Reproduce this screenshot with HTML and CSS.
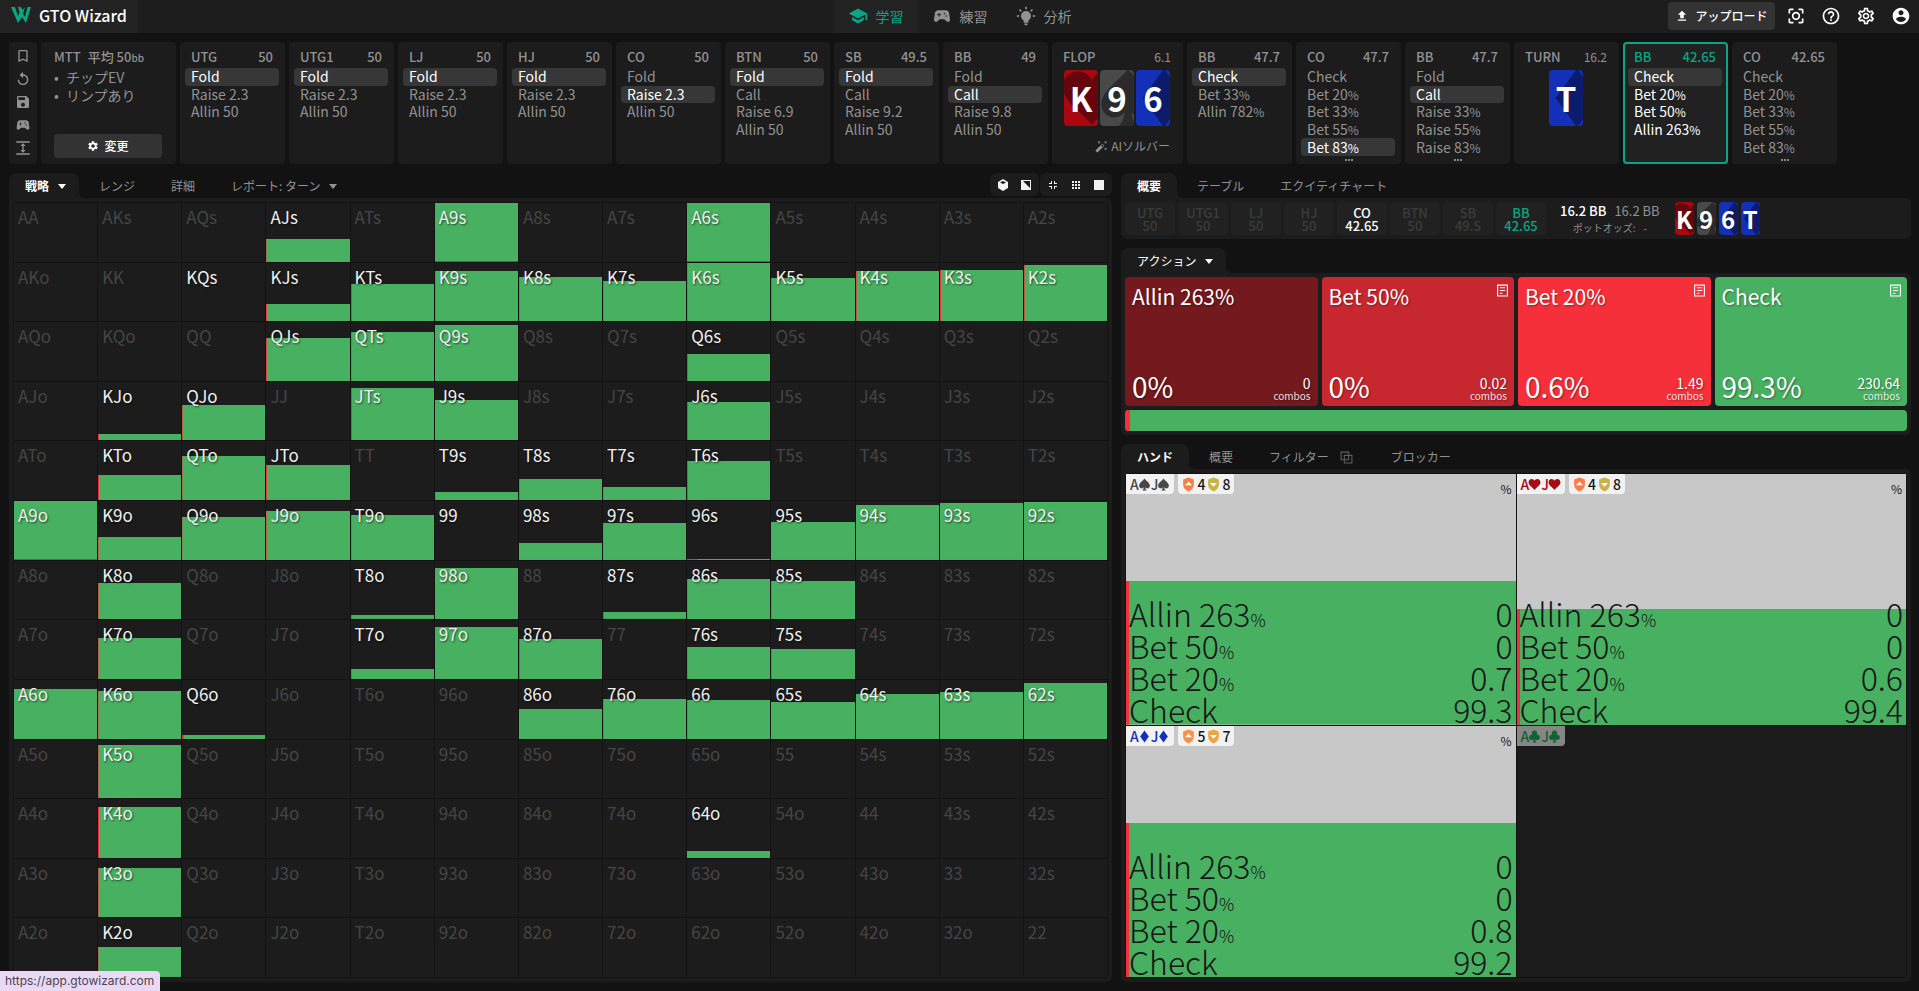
FILE: index.html
```html
<!DOCTYPE html>
<html lang="ja">
<head>
<meta charset="utf-8">
<title>GTO Wizard</title>
<link rel="stylesheet" href="styles.css">
</head>
<body>
<svg class="defs" aria-hidden="true">
  <symbol id="spade" viewBox="0 0 24 24"><path d="M12 1C9.500 5 2 9 2 14.500a4.800 4.800 0 0 0 8.700 2.800C10.600 19.500 9.800 21.500 8 23h8c-1.800-1.500-2.600-3.500-2.700-5.700A4.800 4.800 0 0 0 22 14.500C22 9 14.500 5 12 1z"/></symbol>
  <symbol id="heart" viewBox="0 0 24 24"><path d="M12 22C9 18 1 13.500 1 7.800 1 4.500 3.500 2 6.600 2 9 2 11 3.300 12 5.300 13 3.300 15 2 17.400 2 20.500 2 23 4.500 23 7.800 23 13.500 15 18 12 22z"/></symbol>
  <symbol id="diamond" viewBox="0 0 24 24"><path d="M12 1l8 11-8 11-8-11z"/></symbol>
  <symbol id="club" viewBox="0 0 24 24"><path d="M12 1a5 5 0 0 0-4.300 7.700A5 5 0 1 0 10.700 17c-.1 2.400-1 4.500-2.700 6h8c-1.700-1.500-2.600-3.600-2.700-6a5 5 0 1 0 3-8.300A5 5 0 0 0 12 1z"/></symbol>
  <symbol id="pad" viewBox="0 0 24 24"><path d="M21.58 16.09l-1.09-7.66C20.21 6.46 18.52 5 16.53 5H7.47C5.48 5 3.79 6.46 3.51 8.43l-1.09 7.66C2.2 17.63 3.39 19 4.94 19c.68 0 1.32-.27 1.8-.75L9 16h6l2.250 2.250c.48.48 1.130.75 1.800.75 1.560 0 2.750-1.370 2.530-2.910zM11 11H9v2H8v-2H6v-1h2V8h1v2h2v1zm4-1c-.55 0-1-.45-1-1s.45-1 1-1 1 .45 1 1-.45 1-1 1zm2 3c-.55 0-1-.45-1-1s.45-1 1-1 1 .45 1 1-.45 1-1 1z"/></symbol>
  <symbol id="cog" viewBox="0 0 24 24"><path d="M19.14 12.94c.04-.3.06-.61.06-.94 0-.32-.02-.64-.07-.94l2.030-1.580c.18-.14.23-.41.12-.61l-1.920-3.320c-.12-.22-.37-.29-.59-.22l-2.390.96c-.5-.38-1.030-.7-1.620-.94l-.36-2.540c-.04-.24-.24-.41-.48-.41h-3.840c-.24 0-.43.17-.47.41l-.36 2.540c-.59.24-1.130.57-1.620.94l-2.390-.96c-.22-.08-.47 0-.59.22L2.740 8.870c-.12.21-.08.47.12.61l2.030 1.580c-.05.3-.09.63-.09.94s.02.64.07.94l-2.030 1.580c-.18.14-.23.41-.12.61l1.920 3.320c.12.22.37.29.59.22l2.390-.96c.5.38 1.030.7 1.620.94l.36 2.540c.05.24.24.41.48.41h3.840c.24 0 .44-.17.47-.41l.36-2.540c.59-.24 1.130-.56 1.620-.94l2.390.96c.22.08.47 0 .59-.22l1.920-3.320c.12-.22.07-.47-.12-.61l-2.010-1.580zM12 15.600c-1.980 0-3.600-1.620-3.600-3.600s1.620-3.600 3.600-3.600 3.600 1.620 3.600 3.600-1.620 3.600-3.600 3.600z"/></symbol>
  <symbol id="note" viewBox="0 0 24 24"><path d="M3 2h18v20H3zM7 7h10M7 12h10M7 17h5" fill="none" stroke="currentColor" stroke-width="2"/></symbol>
  <symbol id="shield-up" viewBox="0 0 24 28"><path d="M12 1l10 3.500v9C22 20 18 24.500 12 27 6 24.500 2 20 2 13.500v-9z"/><path d="M12 8.500l6.500 7h-13z" fill="#fff"/></symbol>
  <symbol id="shield-down" viewBox="0 0 24 28"><path d="M12 1l10 3.500v9C22 20 18 24.500 12 27 6 24.500 2 20 2 13.500v-9z"/><path d="M12 18l6.500-7h-13z" fill="#fff"/></symbol>
</svg>

<header class="topbar">
  <a class="brand" href="#">
    <svg class="logo" viewBox="0 0 20 16"><path d="M0 0h4l3 9 1.500-4L7 0h3l1.500 3L14 0l-2 7 2 3 2.500-10H20l-5 16-4-6-4 6z" fill="#0aa584"/></svg>
    <span>GTO Wizard</span>
  </a>
  <nav class="nav">
    <a class="nav-item current" href="#"><svg viewBox="0 0 24 24"><path d="M5 13.180v4L12 21l7-3.820v-4L12 17l-7-3.820zM12 3L1 9l11 6 9-4.910V17h2V9L12 3z"/></svg>学習</a>
    <a class="nav-item" href="#"><svg><use href="#pad"/></svg>練習</a>
    <a class="nav-item" href="#"><svg viewBox="0 0 24 24"><path d="M12 6A6 6 0 0 1 18 12C18 14.220 16.790 16.160 15 17.200V19A1 1 0 0 1 14 20H10A1 1 0 0 1 9 19V17.200C7.210 16.160 6 14.220 6 12A6 6 0 0 1 12 6M14 21V22A1 1 0 0 1 13 23H11A1 1 0 0 1 10 22V21H14M20 11H23V13H20V11M1 11H4V13H1V11M13 1V4H11V1H13M4.920 3.500L7.050 5.640L5.630 7.050L3.500 4.930L4.920 3.500M16.950 5.630L19.070 3.500L20.500 4.930L18.370 7.050L16.950 5.630Z"/></svg>分析</a>
  </nav>
  <div class="tools">
    <button class="upload" type="button"><svg viewBox="0 0 24 24"><path d="M5 20h14v-2H5v2zm0-10h4v6h6v-6h4l-7-7-7 7z"/></svg>アップロード</button>
    <button class="tool" type="button" aria-label="スキャン"><svg viewBox="0 0 24 24"><path d="M5 15H3v4c0 1.100.9 2 2 2h4v-2H5v-4zM5 5h4V3H5c-1.100 0-2 .9-2 2v4h2V5zm14-2h-4v2h4v4h2V5c0-1.100-.9-2-2-2zm0 16h-4v2h4c1.100 0 2-.9 2-2v-4h-2v4zM12 7c-2.760 0-5 2.240-5 5s2.240 5 5 5 5-2.240 5-5-2.240-5-5-5zm0 8c-1.650 0-3-1.350-3-3s1.350-3 3-3 3 1.350 3 3-1.350 3-3 3z"/></svg></button>
    <button class="tool" type="button" aria-label="ヘルプ"><svg viewBox="0 0 24 24"><path d="M11 18h2v-2h-2v2zm1-16C6.480 2 2 6.480 2 12s4.480 10 10 10 10-4.480 10-10S17.520 2 12 2zm0 18c-4.410 0-8-3.590-8-8s3.590-8 8-8 8 3.590 8 8-3.590 8-8 8zm0-14c-2.210 0-4 1.790-4 4h2c0-1.100.9-2 2-2s2 .9 2 2c0 2-3 1.750-3 5h2c0-2.250 3-2.500 3-5 0-2.210-1.790-4-4-4z"/></svg></button>
    <button class="tool" type="button" aria-label="設定"><svg viewBox="0 0 24 24"><path d="M19.430 12.980c.04-.32.07-.64.07-.98 0-.34-.03-.66-.07-.98l2.110-1.650c.19-.15.24-.42.12-.64l-2-3.460c-.09-.16-.26-.25-.44-.25-.06 0-.12.01-.17.03l-2.490 1c-.52-.4-1.080-.73-1.690-.98l-.38-2.650C14.460 2.180 14.250 2 14 2h-4c-.25 0-.46.18-.49.42l-.38 2.650c-.61.25-1.170.59-1.690.98l-2.490-1c-.06-.02-.12-.03-.18-.03-.17 0-.34.09-.43.25l-2 3.460c-.13.22-.07.49.12.64l2.110 1.650c-.04.32-.07.65-.07.98 0 .33.03.66.07.98l-2.110 1.650c-.19.15-.24.42-.12.64l2 3.460c.09.16.26.25.44.25.06 0 .12-.01.17-.03l2.490-1c.52.4 1.080.73 1.690.98l.38 2.650c.03.24.24.42.49.42h4c.25 0 .46-.18.49-.42l.38-2.650c.61-.25 1.170-.59 1.690-.98l2.490 1c.06.02.12.03.18.03.17 0 .34-.09.43-.25l2-3.460c.12-.22.07-.49-.12-.64l-2.110-1.650zm-1.980-1.710c.04.31.05.52.05.73 0 .21-.02.43-.05.73l-.14 1.130.89.7 1.080.84-.7 1.210-1.270-.51-1.040-.42-.9.68c-.43.32-.84.56-1.250.73l-1.060.43-.16 1.130-.2 1.350h-1.400l-.19-1.350-.16-1.130-1.060-.43c-.43-.18-.83-.41-1.230-.71l-.91-.7-1.060.43-1.270.51-.7-1.210 1.080-.84.89-.7-.14-1.130c-.03-.31-.05-.54-.05-.74s.02-.43.05-.73l.14-1.130-.89-.7-1.080-.84.7-1.210 1.270.51 1.040.42.9-.68c.43-.32.84-.56 1.250-.73l1.060-.43.16-1.130.2-1.350h1.390l.19 1.350.16 1.130 1.060.43c.43.18.83.41 1.230.71l.91.7 1.060-.43 1.270-.51.7 1.210-1.070.85-.89.7.14 1.130zM12 8c-2.210 0-4 1.790-4 4s1.790 4 4 4 4-1.790 4-4-1.790-4-4-4zm0 6c-1.100 0-2-.9-2-2s.9-2 2-2 2 .9 2 2-.9 2-2 2z"/></svg></button>
    <button class="tool" type="button" aria-label="アカウント"><svg viewBox="0 0 24 24"><path d="M12 2C6.480 2 2 6.480 2 12s4.480 10 10 10 10-4.480 10-10S17.520 2 12 2zm0 3c1.660 0 3 1.340 3 3s-1.340 3-3 3-3-1.340-3-3 1.340-3 3-3zm0 14.200c-2.500 0-4.710-1.280-6-3.220.03-1.990 4-3.080 6-3.080 1.990 0 5.970 1.090 6 3.080-1.290 1.940-3.500 3.220-6 3.220z"/></svg></button>
  </div>
</header>

<section class="strip">
  <div class="side-tools">
    <button type="button" aria-label="ブックマーク"><svg viewBox="0 0 24 24"><path d="M17 3H7c-1.100 0-1.990.9-1.990 2L5 21l7-3 7 3V5c0-1.100-.9-2-2-2zm0 15l-5-2.180L7 18V5h10v13z"/></svg></button>
    <button type="button" aria-label="リセット"><svg viewBox="0 0 24 24"><path d="M12 5V1L7 6l5 5V7c3.310 0 6 2.690 6 6s-2.690 6-6 6-6-2.690-6-6H4c0 4.420 3.580 8 8 8s8-3.580 8-8-3.580-8-8-8z"/></svg></button>
    <button type="button" aria-label="保存"><svg viewBox="0 0 24 24"><path d="M17 3H5c-1.110 0-2 .9-2 2v14c0 1.100.89 2 2 2h14c1.100 0 2-.9 2-2V7l-4-4zm-5 16c-1.660 0-3-1.340-3-3s1.340-3 3-3 3 1.340 3 3-1.340 3-3 3zm3-10H5V5h10v4z"/></svg></button>
    <button type="button" aria-label="練習"><svg><use href="#pad"/></svg></button>
    <button type="button" aria-label="高さ"><svg viewBox="0 0 24 24"><path d="M2 20h20v2H2zM2 2h20v2H2zm11 7h3l-4-4-4 4h3v6H8l4 4 4-4h-3z"/></svg></button>
  </div>
  <div class="setup">
    <div class="setup-title"><span>MTT</span><span>平均 50<small>bb</small></span></div>
    <ul><li>チップEV</li><li>リンプあり</li></ul>
    <button class="change" type="button"><svg><use href="#cog"/></svg>変更</button>
  </div>
  <div class="nodes" id="nodes"></div>
</section>

<main class="main">
  <section class="left">
    <div class="tabbar">
      <div class="tabs">
        <button class="tab active" type="button">戦略<i class="caret"></i></button>
        <button class="tab" type="button">レンジ</button>
        <button class="tab" type="button">詳細</button>
        <button class="tab" type="button">レポート: ターン<i class="caret"></i></button>
      </div>
      <div class="views">
        <div class="view-group">
          <button type="button" aria-label="3D"><svg viewBox="0 0 12 12"><path fill-rule="evenodd" d="M6 0l5 3v6l-5 3-5-3V3zM6 2L3 3.500 6 5l3-1.500z"/></svg></button>
          <button type="button" aria-label="対角"><svg viewBox="0 0 12 12"><path fill-rule="evenodd" d="M1 1h10v10H1zM3 2l7 7V2z"/></svg></button>
        </div>
        <div class="view-group">
          <button type="button" aria-label="縮小"><svg viewBox="0 0 12 12"><path d="M4 2h1v3H2V4h2zM7 2h1v2h2v1H7zM2 7h3v3H4V8H2zM7 7h3v1H8v2H7z"/></svg></button>
          <button type="button" aria-label="グリッド"><svg viewBox="0 0 12 12"><path d="M3 2v8M6 2v8M9 2v8" stroke="#eee" stroke-width="2" stroke-dasharray="2 1"/></svg></button>
          <button type="button" aria-label="全体"><svg viewBox="0 0 12 12"><path d="M1 1h10v10H1z"/></svg></button>
        </div>
      </div>
    </div>
    <div class="panel grow"><div class="matrix" id="matrix"></div></div>
  </section>

  <section class="right">
    <div>
      <div class="tabbar"><div class="tabs">
        <button class="tab active" type="button">概要</button>
        <button class="tab" type="button">テーブル</button>
        <button class="tab" type="button">エクイティチャート</button>
      </div></div>
      <div class="panel summary">
        <div class="seats">
          <div class="seat"><span>UTG</span><span>50</span></div>
          <div class="seat"><span>UTG1</span><span>50</span></div>
          <div class="seat"><span>LJ</span><span>50</span></div>
          <div class="seat"><span>HJ</span><span>50</span></div>
          <div class="seat live"><span>CO</span><span>42.65</span></div>
          <div class="seat"><span>BTN</span><span>50</span></div>
          <div class="seat"><span>SB</span><span>49.5</span></div>
          <div class="seat hero"><span>BB</span><span>42.65</span></div>
        </div>
        <div class="pot">
          <div><b>16.2 BB</b><span>16.2 BB</span></div>
          <div class="odds"><span>ポットオッズ:</span><span>-</span></div>
        </div>
        <div class="cards small">
          <span class="card hearts"><svg><use href="#heart"/></svg><b>K</b></span>
          <span class="card spades"><svg><use href="#spade"/></svg><b>9</b></span>
          <span class="card diamonds"><svg><use href="#diamond"/></svg><b>6</b></span>
          <span class="card diamonds"><svg><use href="#diamond"/></svg><b>T</b></span>
        </div>
      </div>
    </div>

    <div>
      <div class="tabbar"><div class="tabs"><button class="tab active plain" type="button">アクション<i class="caret"></i></button></div></div>
      <div class="panel">
        <div class="tiles">
          <button class="tile allin" type="button"><span class="tile-top">Allin 263%</span><span class="tile-low"><strong>0%</strong><span>0<small>combos</small></span></span></button>
          <button class="tile bet50" type="button"><span class="tile-top">Bet 50%<svg><use href="#note"/></svg></span><span class="tile-low"><strong>0%</strong><span>0.02<small>combos</small></span></span></button>
          <button class="tile bet20" type="button"><span class="tile-top">Bet 20%<svg><use href="#note"/></svg></span><span class="tile-low"><strong>0.6%</strong><span>1.49<small>combos</small></span></span></button>
          <button class="tile check" type="button"><span class="tile-top">Check<svg><use href="#note"/></svg></span><span class="tile-low"><strong>99.3%</strong><span>230.64<small>combos</small></span></span></button>
        </div>
        <div class="ratio"><i></i></div>
      </div>
    </div>

    <div class="hands-block">
      <div class="tabbar"><div class="tabs">
        <button class="tab active" type="button">ハンド</button>
        <button class="tab" type="button">概要</button>
        <button class="tab" type="button">フィルター<svg class="copy" viewBox="0 0 12 12"><path d="M1 1h7v7H1zM4 4h7v7H4z" fill="none" stroke="currentColor"/></svg></button>
        <button class="tab" type="button">ブロッカー</button>
      </div></div>
      <div class="panel grow"><div class="hands" id="hands"></div></div>
    </div>
  </section>
</main>
<div class="status">https://app.gtowizard.com</div>
<script src="app.js"></script>
</body>
</html>
```

FILE: styles.css
```css
* { box-sizing: border-box; }
body {
  margin: 0; height: 100vh; overflow: hidden; display: flex; flex-direction: column;
  background: #121212; color: #929292;
  font: 14px/18px "Noto Sans CJK JP", "Noto Sans", sans-serif;
}
button { margin: 0; padding: 0; border: 0; background: none; color: inherit; font: inherit; text-align: left; }
a { color: inherit; text-decoration: none; }
svg { display: block; fill: currentColor; flex: none; }
.defs { position: absolute; width: 0; height: 0; }

.topbar { display: grid; grid-template-columns: 1fr auto 1fr; height: 33px; flex: none; background: #1d1d1d; }
.brand { display: flex; align-items: center; gap: 8px; width: 138px; padding: 0 0 4px 11px; background: #222; color: #fff; font-size: 16px; font-weight: 500; }
.logo { width: 20px; height: 16px; }
.nav { display: flex; }
.nav-item { display: flex; align-items: center; gap: 8px; width: 84px; padding: 0 0 2px 14px; }
.nav-item svg { width: 20px; height: 20px; }
.nav-item.current { background: #222; color: #0aa584; }
.tools { display: flex; align-items: center; justify-content: flex-end; gap: 15px; padding: 0 8px 1px 0; color: #fff; }
.tool svg { width: 20px; height: 20px; }
.upload { display: flex; align-items: center; justify-content: center; gap: 6px; width: 107px; height: 28px; margin-right: -4px; border-radius: 4px; background: #333; font-size: 12px; font-weight: 500; }
.upload svg { width: 14px; height: 14px; }

.strip { display: flex; gap: 4px; flex: none; height: 122px; margin: 9px 9px 0; }
.side-tools, .setup, .node { background: #1c1c1c; border-radius: 4px; flex: none; }
.side-tools { width: 28px; display: flex; flex-direction: column; align-items: center; padding-top: 6px; gap: 7px; }
.side-tools svg { width: 16px; height: 16px; }
.setup { width: 135px; padding: 6px 14px 6px 13px; display: flex; flex-direction: column; }
.setup-title { display: flex; gap: 7px; font-size: 13px; line-height: 17px; font-weight: 500; white-space: nowrap; }
.setup-title small { font-size: 10px; }
.setup ul { margin: 2px 0 0; padding: 0 0 0 12px; list-style: none; }
.setup li::before { content: "•"; float: left; margin-left: -12px; }
.change { display: flex; align-items: center; justify-content: center; gap: 5px; height: 24px; margin-top: auto; border-radius: 4px; background: #333; color: #fff; font-size: 12px; font-weight: 500; }
.change svg { width: 12px; height: 12px; }

.nodes { display: flex; gap: 4px; }
.node { position: relative; width: 105px; padding: 6px 6px 0 5px; }
.node-head { display: flex; justify-content: space-between; padding: 0 6px; font-size: 13px; font-weight: 500; }
.node-acts { display: grid; grid-template-rows: repeat(5, 1fr); height: 88px; margin-top: 2px; }
.node-acts button { display: flex; align-items: center; padding: 0 6px; border-radius: 4px; line-height: 17px; }
.node-acts small { font-size: 12px; line-height: 12px; }
.node-acts button.picked { background: #373737; color: #fff; }
.node.current { background: #212121; box-shadow: inset 0 0 0 2px #0aa584; color: #fff; }
.node.current .node-head { color: #0aa584; }
.more { position: absolute; left: 0; right: 0; bottom: 3px; display: flex; justify-content: center; gap: 1px; }
.more i { width: 2px; height: 2px; border-radius: 50%; background: #aaa; }
.street-flop { width: 131px; }
.street { display: flex; flex-direction: column; }
.street .node-head span:last-child { font-size: 12px; font-weight: 400; }
.street .cards { justify-content: center; margin-top: 4px; }
.ai { display: flex; align-items: center; justify-content: flex-end; gap: 3px; margin: 11px 7px 0 0; font-size: 12px; }
.ai svg { width: 13px; height: 13px; }

.cards { display: flex; gap: 2px; }
.card { position: relative; display: grid; place-items: center; width: 34px; height: 56px; overflow: hidden; border-radius: 4px; color: #fff; }
.card svg { position: absolute; left: -4px; top: -4px; width: 64px; height: 64px; }
.card b { position: relative; font-size: 33px; line-height: 56px; }
.small { gap: 3px; }
.small .card { width: 19px; height: 33px; }
.small .card svg { left: -3px; top: -2px; width: 37px; height: 37px; }
.small .card b { font-size: 24px; line-height: 33px; }
.hearts { background: #a90811; } .hearts svg { fill: #66050b; }
.spades { background: #494949; } .spades svg { fill: #2b2b2b; }
.diamonds { background: #1430b8; } .diamonds svg { fill: #0c1c6c; }

.main { flex: 1; min-height: 0; display: grid; grid-template-columns: 1103fr 790fr; gap: 9px; padding: 9px 8px 9px 9px; }
.left, .right, .hands-block { display: flex; flex-direction: column; min-width: 0; min-height: 0; }
.right { gap: 9px; }
.hands-block { flex: 1; }
.tabbar { display: flex; justify-content: space-between; height: 25px; flex: none; }
.tabs { display: flex; gap: 4px; }
.tab { position: relative; display: flex; align-items: center; gap: 9px; padding: 1px 16px 0; border-radius: 8px 8px 0 0; font-size: 12px; }
.tab.active { background: #1c1c1c; color: #fff; font-weight: 700; }
.tab.plain { font-weight: 400; }
.tab.active::after { content: ""; position: absolute; left: 100%; bottom: 0; width: 6px; height: 6px; background: radial-gradient(circle at 100% 0, transparent 6px, #1c1c1c 6px); }
.caret { margin-right: -3px; border: 4px solid transparent; border-top: 5px solid currentColor; border-bottom: 0; }
.copy { width: 13px; height: 13px; margin: 0 2px; opacity: .6; }
.panel { padding: 4px; border-radius: 0 6px 6px 6px; background: #1c1c1c; }
.grow { flex: 1; min-height: 0; display: grid; }

.views { display: flex; gap: 1px; height: 23px; color: #f2f2f2; }
.view-group { display: flex; align-items: center; gap: 11px; padding: 0 7px; border-radius: 6px; background: #1c1c1c; }
.view-group svg { width: 12px; height: 12px; }

.matrix { display: grid; grid-template: repeat(13, minmax(0, 1fr)) / repeat(13, minmax(0, 1fr)); gap: 1px; padding: 1px; border-radius: 4px; background: #131313; overflow: hidden; }
.cell {
  display: flex; align-items: flex-start; padding: 2px 4px; color: #454545; background: #1c1c1c; font-size: 17px; line-height: 23px;
}
.cell.on {
  color: #f0f0f0; text-shadow: 1px 1px 2px rgba(0, 0, 0, .6);
  background:
    linear-gradient(rgba(255, 43, 56, var(--mix)), rgba(255, 43, 56, var(--mix))) left bottom / var(--red) var(--fill) no-repeat,
    linear-gradient(#48b061, #48b061) left bottom / 100% var(--fill) no-repeat, #1c1c1c;
}

.summary { display: flex; height: 41px; }
.seats { display: flex; gap: 3px; }
.seat { display: flex; flex-direction: column; align-items: center; justify-content: center; width: 50px; border-radius: 4px; background: #212121; color: #3c3c3c; font-size: 13px; line-height: 13px; font-weight: 500; }
.seat.live { color: #fff; }
.seat.hero { color: #0aa584; }
.pot { margin-left: 14px; display: flex; flex-direction: column; align-items: center; font-size: 13px; line-height: 18px; }
.pot div { display: flex; gap: 8px; }
.pot b { color: #fff; font-weight: 500; }
.pot .odds { font-size: 10px; line-height: 15px; }
.summary .cards { margin-left: 15px; }

.tiles { display: grid; grid-template-columns: repeat(4, 1fr); gap: 4px; }
.tile { display: flex; flex-direction: column; justify-content: space-between; height: 129px; padding: 5px 7px; border-radius: 4px; color: #fff; text-shadow: 1px 1px 2px rgba(0, 0, 0, .4); }
.tile-top { display: flex; justify-content: space-between; font-size: 21px; line-height: 28px; }
.tile-top svg { width: 13px; height: 13px; margin: 2px -2px 0 0; }
.tile-low { display: flex; justify-content: space-between; align-items: flex-end; }
.tile-low strong { font-size: 28px; line-height: 30px; font-weight: 400; }
.tile-low span { display: flex; flex-direction: column; align-items: flex-end; font-size: 14px; line-height: 14px; }
.tile-low small { font-size: 10px; line-height: 11px; opacity: .85; }
.allin { background: #74191e; } .bet50 { background: #c72830; } .bet20 { background: #f6303a; } .check { background: #48b061; }
.ratio { height: 21px; margin-top: 4px; border-radius: 4px; overflow: hidden; background: #48b061; }
.ratio i { display: block; width: 5px; height: 100%; background: #f6303a; }

.hands { display: grid; grid-template: repeat(2, minmax(0, 1fr)) / repeat(2, minmax(0, 1fr)); gap: 1px; padding: 1px; border-radius: 4px; background: #111; overflow: hidden; }
.hand { display: flex; flex-direction: column; justify-content: space-between; background: #1c1c1c; color: #161616; }
.hand.on {
  background:
    linear-gradient(#f6303a, #f6303a) left bottom / 3px var(--fill) no-repeat,
    linear-gradient(#48b061, #48b061) left bottom / 100% var(--fill) no-repeat, #c8c8c8;
}
.hand-top { display: flex; gap: 4px; }
.badge { display: flex; align-items: center; height: 20px; padding: 0 4px; border-radius: 0 0 4px 4px; background: #f2f2f2; font-weight: 500; }
.badge.pair { padding: 0 4px 0 4px; border-bottom-left-radius: 0; }
.badge.pair svg { width: 13px; height: 13px; margin-left: -1px; }
.badge.score { gap: 2px; }
.badge.score svg { width: 13px; height: 15px; }
.badge .up { fill: #ff7d45; } .badge .down { fill: #c9b24a; }
.badge .up.mid { fill: #ff8f45; } .badge .down.mid { fill: #eaa545; }
.s { color: #474747; } .h { color: #a90811; } .d { color: #1430b8; } .c { color: #11632f; }
.badge.off { background: #868686; }
.unit { margin: 6px 4px 0 auto; font-size: 12px; }
.hand-acts { padding: 0 3px; font-size: 32px; line-height: 32px; font-weight: 300; }
.hand-acts div { display: flex; justify-content: space-between; height: 32px; }
.hand-acts small { font-size: 17px; line-height: 17px; }

.status { position: absolute; left: 0; bottom: 0; padding: 0 6px 0 5px; border-top-right-radius: 4px; background: #e9d9f5; color: #4a4453; font: 12px/20px Inter, sans-serif; }
```

FILE: app.js
```js
const el = (tag, cls, html = '') => {
  const e = document.createElement(tag);
  if (cls) e.className = cls;
  e.innerHTML = html;
  return e;
};
const pct = t => t.replace('%', '<small>%</small>');
const use = id => `<svg><use href="#${id}"/></svg>`;
const suitClass = { heart: 'hearts', spade: 'spades', diamond: 'diamonds' };
const card = ([r, s]) => `<span class="card ${suitClass[s]}">${use(s)}<b>${r}</b></span>`;

const WAND = '<svg viewBox="0 0 24 24"><path d="M7.5 5.600L10 7 8.600 4.500 10 2 7.500 3.400 5 2l1.400 2.500L5 7zm12 9.800L17 14l1.400 2.500L17 19l2.500-1.400L22 19l-1.400-2.500L22 14zM22 2l-2.500 1.400L17 2l1.400 2.500L17 7l2.500-1.400L22 7l-1.400-2.500zm-7.630 5.290c-.39-.39-1.020-.39-1.410 0L1.290 18.960c-.39.39-.39 1.020 0 1.410l2.340 2.340c.39.39 1.020.39 1.410 0L16.700 11.050c.39-.39.39-1.020 0-1.410l-2.330-2.350zm-1.030 5.490l-2.120-2.120 2.440-2.440 2.120 2.120-2.440 2.440z"/></svg>';

// Position, stack, actions, index of the chosen action, flags
const nodes = [
  ['UTG', '50', 'Fold|Raise 2.3|Allin 50', 0],
  ['UTG1', '50', 'Fold|Raise 2.3|Allin 50', 0],
  ['LJ', '50', 'Fold|Raise 2.3|Allin 50', 0],
  ['HJ', '50', 'Fold|Raise 2.3|Allin 50', 0],
  ['CO', '50', 'Fold|Raise 2.3|Allin 50', 1],
  ['BTN', '50', 'Fold|Call|Raise 6.9|Allin 50', 0],
  ['SB', '49.5', 'Fold|Call|Raise 9.2|Allin 50', 0],
  ['BB', '49', 'Fold|Call|Raise 9.8|Allin 50', 1],
  { name: 'FLOP', pot: '6.1', cards: [['K', 'heart'], ['9', 'spade'], ['6', 'diamond']], ai: true },
  ['BB', '47.7', 'Check|Bet 33%|Allin 782%', 0],
  ['CO', '47.7', 'Check|Bet 20%|Bet 33%|Bet 55%|Bet 83%', 4, 'more'],
  ['BB', '47.7', 'Fold|Call|Raise 33%|Raise 55%|Raise 83%', 1, 'more'],
  { name: 'TURN', pot: '16.2', cards: [['T', 'diamond']] },
  ['BB', '42.65', 'Check|Bet 20%|Bet 50%|Allin 263%', 0, 'current'],
  ['CO', '42.65', 'Check|Bet 20%|Bet 33%|Bet 55%|Bet 83%', -1, 'more'],
];
const nodeBox = document.getElementById('nodes');
nodes.forEach(n => {
  if (!Array.isArray(n)) {
    nodeBox.append(el('div', 'node street' + (n.ai ? ' street-flop' : ''),
      `<div class="node-head"><span>${n.name}</span><span>${n.pot}</span></div>
       <div class="cards">${n.cards.map(card).join('')}</div>
       ${n.ai ? `<button type="button" class="ai">${WAND}AIソルバー</button>` : ''}`));
    return;
  }
  const [name, stack, acts, picked, flag] = n;
  nodeBox.append(el('div', 'node' + (flag === 'current' ? ' current' : ''),
    `<div class="node-head"><span>${name}</span><span>${stack}</span></div>
     <div class="node-acts">${acts.split('|').map((a, i) =>
       `<button type="button"${i === picked ? ' class="picked"' : ''}><span>${pct(a)}</span></button>`).join('')}</div>
     ${flag === 'more' ? '<div class="more"><i></i><i></i><i></i></div>' : ''}`));
});

// hand: [bar height out of 59, bet share in cell pixels]
const range = {
  AJs: [23, .4], A9s: [59, 0], A6s: [59, 0],
  KQs: [0, 0], KJs: [18, .9], KTs: [38, 1], K9s: [51, .6], K8s: [45, .6], K7s: [41, .6], K6s: [59, .5], K5s: [44, .7], K4s: [51, .7], K3s: [52, 1], K2s: [57, .7],
  QJs: [43, .8], QTs: [49, .5], Q9s: [56, 0], Q6s: [27, 1],
  KJo: [7, 1], QJo: [36, .6], JTs: [53, 1], J9s: [41, 0], J6s: [39, 1],
  KTo: [25, 1], QTo: [44, .4], JTo: [35, 1], T9s: [8, .5], T8s: [21, .6], T7s: [13, .4], T6s: [39, 1],
  A9o: [59, 0], K9o: [23, .6], Q9o: [43, .3], J9o: [49, .6], T9o: [45, .5], 99: [0, 0], '98s': [17, 0], '97s': [37, .2], '96s': [1, 11], '95s': [38, 0], '94s': [55, 0], '93s': [57, 0], '92s': [58, 0],
  K8o: [37, .6], T8o: [4, .6], '98o': [52, 0], '87s': [7, .9], '86s': [41, .5], '85s': [39, .5],
  K7o: [41, .5], T7o: [10, .6], '97o': [52, 0], '87o': [40, 1], '76s': [32, .5], '75s': [30, .5],
  A6o: [50, 0], K6o: [48, .5], Q6o: [4, 2], '86o': [30, 0], '76o': [40, .5], 66: [39, .5], '65s': [37, 0], '64s': [45, 0], '63s': [47, 0], '62s': [56, 0],
  K5o: [54, .5], K4o: [51, 1], '64o': [7, 0], K3o: [50, .6], K2o: [30, .4],
};
const ranks = 'AKQJT98765432';
const matrix = document.getElementById('matrix');
[...ranks].forEach((a, r) => [...ranks].forEach((b, c) => {
  const hand = r === c ? a + b : r < c ? a + b + 's' : b + a + 'o';
  const cell = el('button', 'cell', hand);
  cell.type = 'button';
  const d = range[hand];
  if (d) {
    cell.classList.add('on');
    cell.style.setProperty('--fill', (d[0] / 59 * 100).toFixed(1) + '%');
    cell.style.setProperty('--red', Math.ceil(d[1]) + 'px');
    cell.style.setProperty('--mix', Math.min(1, d[1]));
  }
  matrix.append(cell);
}));

const hands = [
  { s: 's', suit: 'spade', sc: [4, 8], fill: 57.2, v: ['0', '0', '0.7', '99.3'] },
  { s: 'h', suit: 'heart', sc: [4, 8], fill: 46.4, v: ['0', '0', '0.6', '99.4'] },
  { s: 'd', suit: 'diamond', sc: [5, 7], mid: ' mid', fill: 61.5, v: ['0', '0', '0.8', '99.2'] },
  { s: 'c', suit: 'club' },
];
const labels = ['Allin 263%', 'Bet 50%', 'Bet 20%', 'Check'];
const handBox = document.getElementById('hands');
hands.forEach(h => {
  const pair = `<span class="badge pair ${h.s}${h.v ? '' : ' off'}">A${use(h.suit)}J${use(h.suit)}</span>`;
  if (!h.v) { handBox.append(el('div', 'hand', `<div class="hand-top">${pair}</div>`)); return; }
  const m = h.mid || '';
  const box = el('div', 'hand on',
    `<div class="hand-top">${pair}
      <span class="badge score"><svg class="up${m}"><use href="#shield-up"/></svg>${h.sc[0]}<svg class="down${m}"><use href="#shield-down"/></svg>${h.sc[1]}</span>
      <span class="unit">%</span></div>
     <div class="hand-acts">${labels.map((l, i) => `<div><span>${pct(l)}</span><span>${h.v[i]}</span></div>`).join('')}</div>`);
  box.style.setProperty('--fill', h.fill + '%');
  handBox.append(box);
});
```
